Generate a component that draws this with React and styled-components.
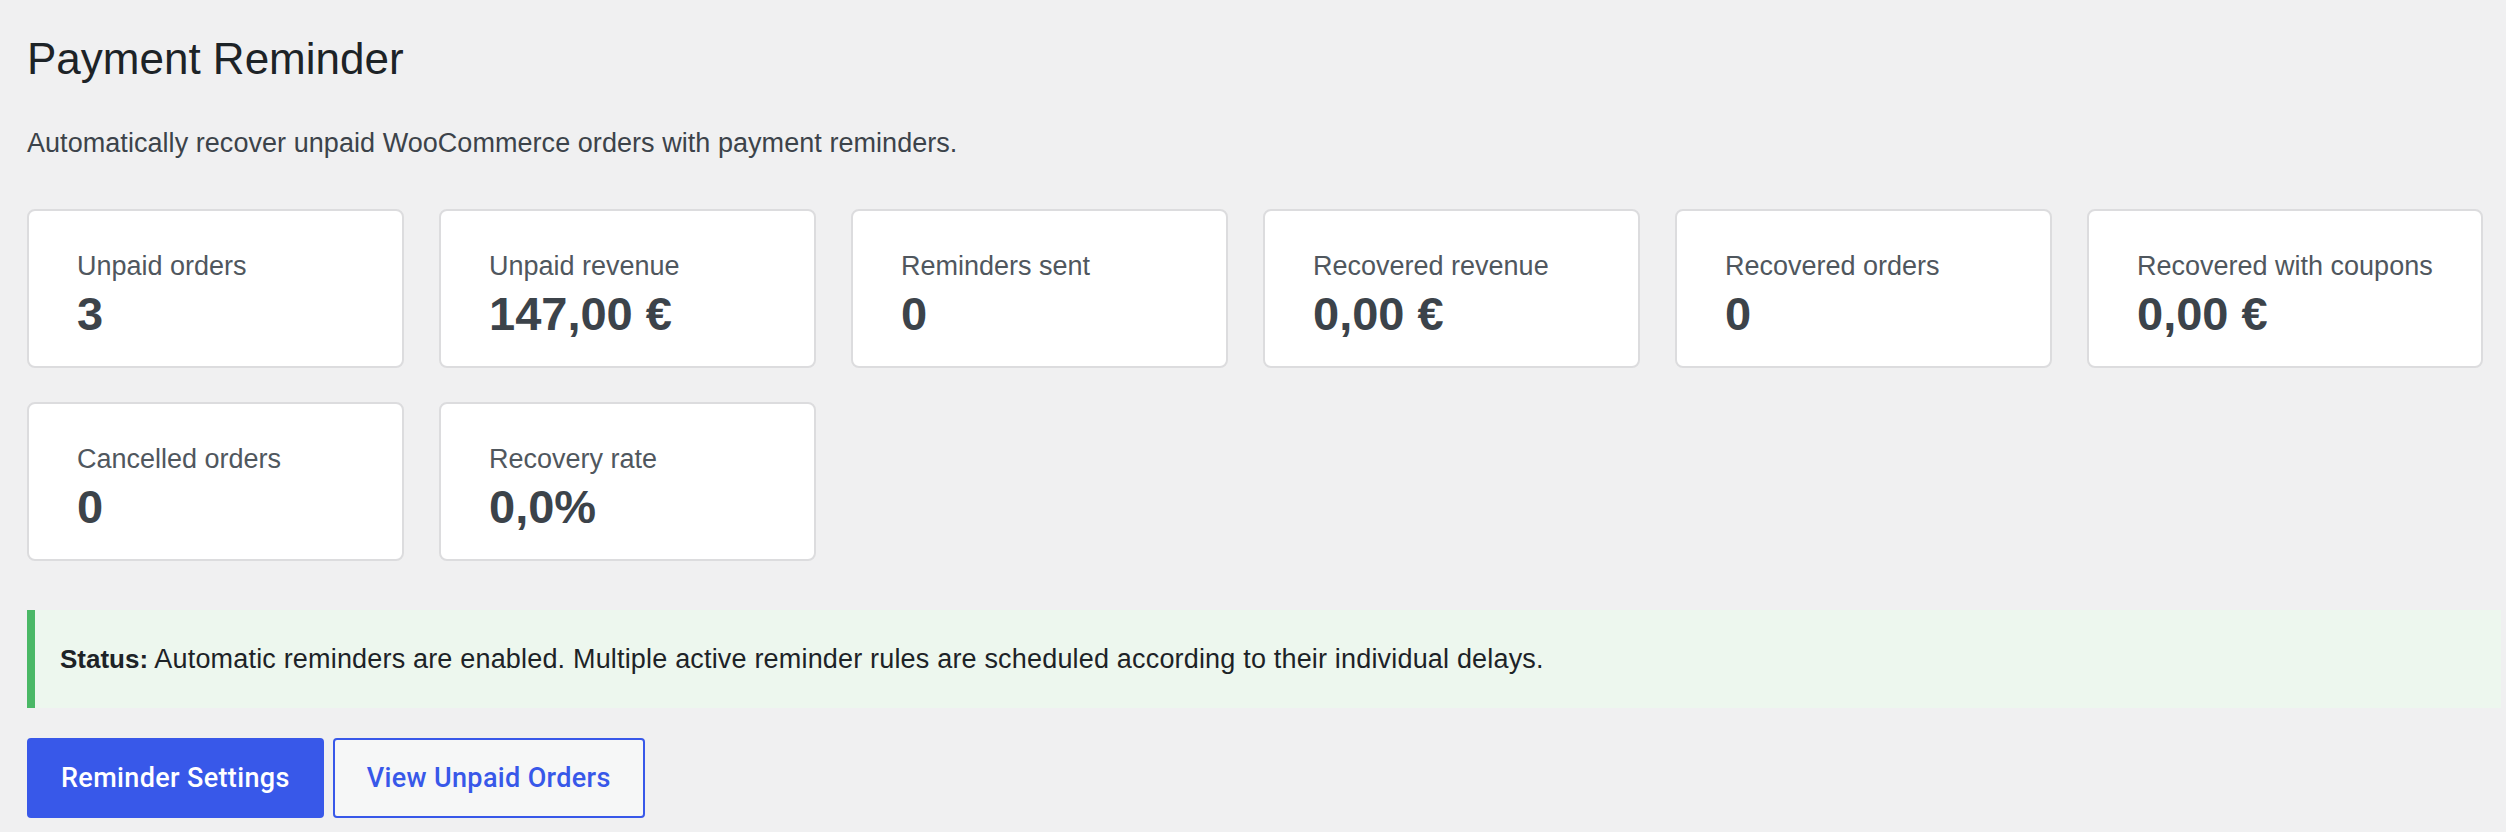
import React from 'react'
import styled, {createGlobalStyle} from 'styled-components'

const Global = createGlobalStyle`
  html, body {
    margin: 0;
    padding: 0;
    background: #f0f0f1;
  }
  body {
    font-family: "Liberation Sans", Arial, sans-serif;
    color: #3c434a;
  }
`

const Wrap = styled.div`
  padding: 29px 5px 0 27px;
`

const Title = styled.h1`
  margin: 0;
  font-size: 44px;
  line-height: 60px;
  font-weight: 400;
  color: #1d2327;
`

const Intro = styled.p`
  margin: 34px 0 0;
  font-size: 27px;
  line-height: 40px;
  letter-spacing: 0.05px;
  color: #3c434a;
`

const Stats = styled.div`
  margin-top: 46px;
  display: flex;
  flex-wrap: wrap;
  column-gap: 35px;
  row-gap: 34px;
`

const Card = styled.div`
  box-sizing: border-box;
  flex: 0 0 auto;
  min-width: 377px;
  padding: 37px 48px 24px;
  background: #fff;
  border: 2px solid #dcdcde;
  border-radius: 8px;
`

const Label = styled.div`
  font-size: 27px;
  line-height: 36px;
  color: #50575e;
  white-space: nowrap;
`

const Value = styled.div`
  margin-top: 2px;
  font-size: 47px;
  line-height: 56px;
  font-weight: 700;
  color: #3c434a;
  white-space: nowrap;
`

const Notice = styled.div`
  margin-top: 49px;
  padding: 29px 24px 29px 25px;
  background: #edf7ee;
  border-left: 8px solid #4ab866;
  font-size: 27px;
  line-height: 40px;
  letter-spacing: 0.18px;
  color: #1d2327;
  b {
    font-size: 26px;
    letter-spacing: 0;
  }
`

const Actions = styled.div`
  margin-top: 30px;
  display: flex;
  column-gap: 9px;
`

const Button = styled.a`
  box-sizing: border-box;
  height: 80px;
  display: inline-flex;
  align-items: center;
  padding: 0 32px;
  border: 2px solid #3858e9;
  border-radius: 4px;
  font-family: Roboto, "Liberation Sans", sans-serif;
  font-size: 27px;
  font-weight: 500;
  letter-spacing: 0.35px;
  text-decoration: none;
  cursor: pointer;
  background: ${props => props.primary ? '#3858e9' : '#f6f7f7'};
  color: ${props => props.primary ? '#fff' : '#3858e9'};
`

const stats = [
  {label: 'Unpaid orders', value: '3'},
  {label: 'Unpaid revenue', value: '147,00 €'},
  {label: 'Reminders sent', value: '0'},
  {label: 'Recovered revenue', value: '0,00 €'},
  {label: 'Recovered orders', value: '0'},
  {label: 'Recovered with coupons', value: '0,00 €'},
  {label: 'Cancelled orders', value: '0'},
  {label: 'Recovery rate', value: '0,0%'},
]

export default function App() {
  return (
    <>
      <Global />
      <Wrap>
        <Title>Payment Reminder</Title>
        <Intro>Automatically recover unpaid WooCommerce orders with payment reminders.</Intro>
        <Stats>
          {stats.map((s, i) => (
            <Card key={i}>
              <Label>{s.label}</Label>
              <Value>{s.value}</Value>
            </Card>
          ))}
        </Stats>
        <Notice>
          <b>Status:</b> Automatic reminders are enabled. Multiple active reminder rules are scheduled according to their individual delays.
        </Notice>
        <Actions>
          <Button primary>Reminder Settings</Button>
          <Button>View Unpaid Orders</Button>
        </Actions>
      </Wrap>
    </>
  )
}
